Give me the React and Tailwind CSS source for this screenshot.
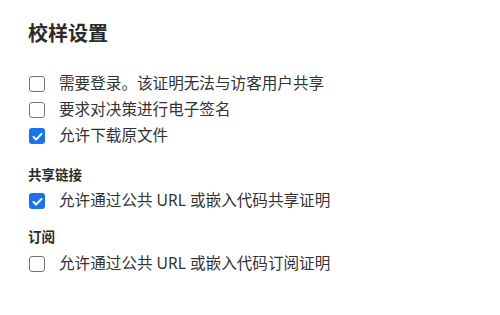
const font = { fontFamily: '"Noto Sans", "Noto Sans CJK SC", sans-serif' }

function Box({ checked }) {
  if (checked) {
    return (
      <span className="flex h-4 w-4 shrink-0 items-center justify-center rounded-[3px] bg-[#1a73e8]">
        <svg viewBox="0 0 16 16" className="h-[13px] w-[13px]" fill="none">
          <path d="M3 8.5l3.2 3.2L13 4.8" stroke="#fff" strokeWidth="2.4" strokeLinecap="round" strokeLinejoin="round" />
        </svg>
      </span>
    )
  }
  return <span className="h-4 w-4 shrink-0 rounded-[3px] border border-[#767676] bg-white" />
}

function Row({ checked, children }) {
  return (
    <label className="flex h-[26px] items-center gap-[14px] pl-px text-[15.6px] text-[#333]">
      <Box checked={checked} />
      <span>{children}</span>
    </label>
  )
}

export default function App() {
  return (
    <div className="h-[315px] w-[500px] bg-white pl-[28px] pt-[20px]" style={font}>
      <h2 className="text-[20px] font-semibold leading-[28px] text-[#2b2b2b]">校样设置</h2>
      <div className="mt-[23px] flex flex-col">
        <Row>需要登录。该证明无法与访客用户共享</Row>
        <Row>要求对决策进行电子签名</Row>
        <Row checked>允许下载原文件</Row>
      </div>
      <div className="mt-[16px] h-5 text-[13.5px] font-semibold leading-5 text-[#2b2b2b]">共享链接</div>
      <div className="mt-[3px]">
        <Row checked>允许通过公共 URL 或嵌入代码共享证明</Row>
      </div>
      <div className="mt-[13px] h-5 text-[13.5px] font-semibold leading-5 text-[#2b2b2b]">订阅</div>
      <div className="mt-[4px]">
        <Row>允许通过公共 URL 或嵌入代码订阅证明</Row>
      </div>
    </div>
  )
}
